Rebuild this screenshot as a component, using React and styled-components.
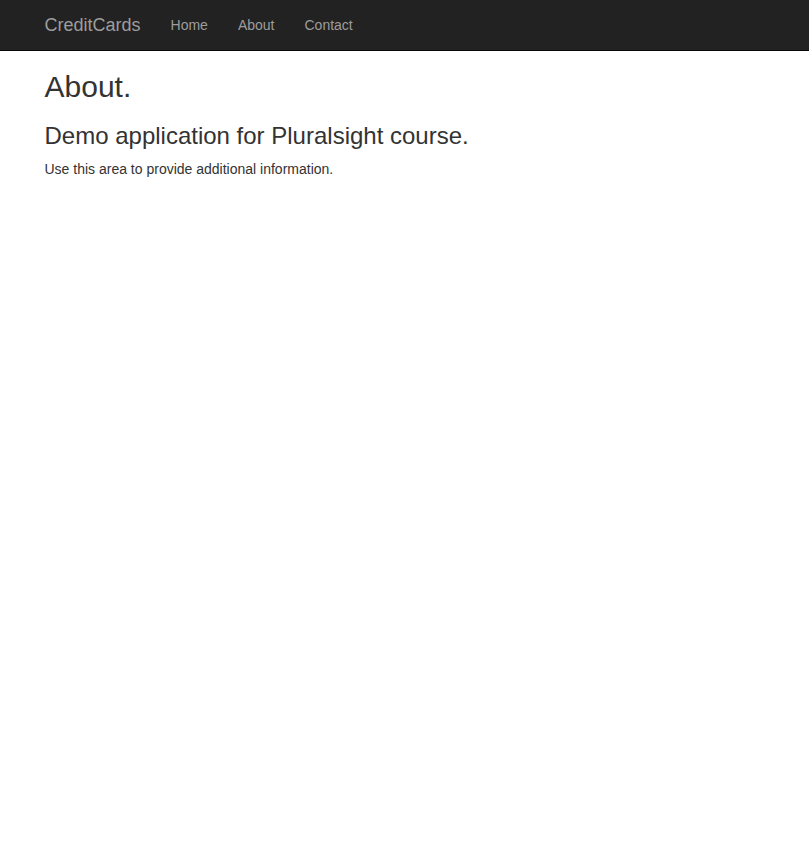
import React from 'react';
import styled, { createGlobalStyle } from 'styled-components';

const GlobalStyle = createGlobalStyle`
    html, body {
        margin:0;
        padding:0;
        background:#fff;
    }
    body {
        font-family:"Liberation Sans", Arial, sans-serif;
        font-size:14px;
        line-height:1.42857143;
        color:#333;
        padding-top:50px;
    }
`;

const Navbar = styled.div`
    position:fixed;
    top:0;
    left:0;
    right:0;
    min-height:50px;
    background:#222;
    border-bottom:1px solid #080808;
    z-index:10;
`;

const Container = styled.div`
    width:750px;
    margin:0 auto;
    padding:0 15px;
    box-sizing:border-box;
`;

const NavInner = styled(Container)`
    display:flex;
    align-items:center;
    height:50px;
`;

const Brand = styled.a`
    font-size:18px;
    line-height:20px;
    color:#9d9d9d;
    text-decoration:none;
    padding-right:15px;
`;

const NavLink = styled.a`
    font-size:14px;
    line-height:20px;
    color:#9d9d9d;
    text-decoration:none;
    padding:15px;
`;

const Title = styled.h2`
    font-size:30px;
    font-weight:500;
    line-height:1.1;
    margin:20px 0 10px;
`;

const Subtitle = styled.h3`
    font-size:24px;
    font-weight:500;
    line-height:1.1;
    margin:20px 0 10px;
`;

const Text = styled.p`
    margin:0 0 10px;
`;

const App = () => {
    return <>
        <GlobalStyle />
        <Navbar>
            <NavInner>
                <Brand href="#">CreditCards</Brand>
                <NavLink href="#">Home</NavLink>
                <NavLink href="#">About</NavLink>
                <NavLink href="#">Contact</NavLink>
            </NavInner>
        </Navbar>
        <Container>
            <Title>About.</Title>
            <Subtitle>Demo application for Pluralsight course.</Subtitle>
            <Text>Use this area to provide additional information.</Text>
        </Container>
    </>
}

export default App;
